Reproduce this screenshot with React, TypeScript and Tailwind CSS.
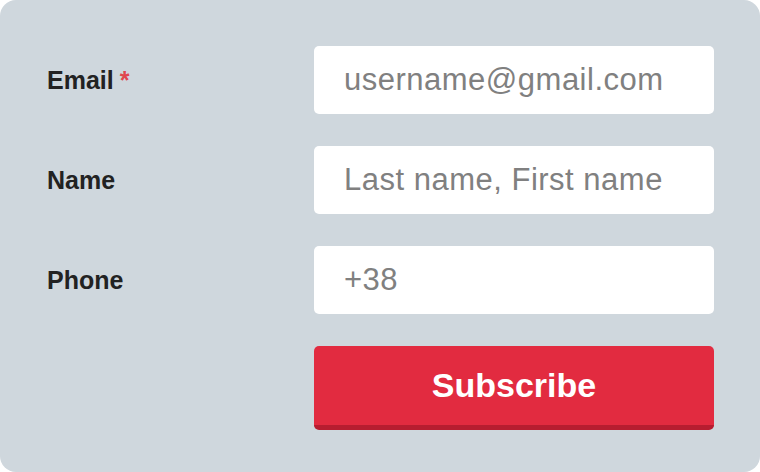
import React from 'react';

const fields = [
  { label: 'Email', required: true, placeholder: 'username@gmail.com', type: 'email' },
  { label: 'Name', required: false, placeholder: 'Last name, First name', type: 'text' },
  { label: 'Phone', required: false, placeholder: '+38', type: 'tel' },
];

const App: React.FC = () => {
  return (
    <div className="w-[760px] h-[472px] bg-white font-['Liberation_Sans',Arial,sans-serif]">
      <form
        className="w-full h-full bg-[#cfd7dd] rounded-[16px] pl-[47px] pr-[46px] pt-[46px] flex flex-col gap-[32px]"
        onSubmit={(e) => e.preventDefault()}
      >
        {fields.map((f) => (
          <div key={f.label} className="flex items-center">
            <label className="flex-1 text-[25px] font-bold text-[#222222] pt-[2px]">
              {f.label}
              {f.required && <span className="text-[#e0474f] ml-[6px]">*</span>}
            </label>
            <input
              type={f.type}
              placeholder={f.placeholder}
              className="w-[400px] h-[68px] bg-white rounded-[5px] px-[30px] text-[31px] tracking-[0.5px] text-[#222222] placeholder:text-[#808080] outline-none"
            />
          </div>
        ))}
        <div className="flex">
          <div className="flex-1" />
          <button
            type="submit"
            className="w-[400px] h-[84px] bg-[#e22b40] border-b-[5px] border-[#b71d30] rounded-[5px] text-white text-[34px] font-bold"
          >
            Subscribe
          </button>
        </div>
      </form>
    </div>
  );
};

export default App;
